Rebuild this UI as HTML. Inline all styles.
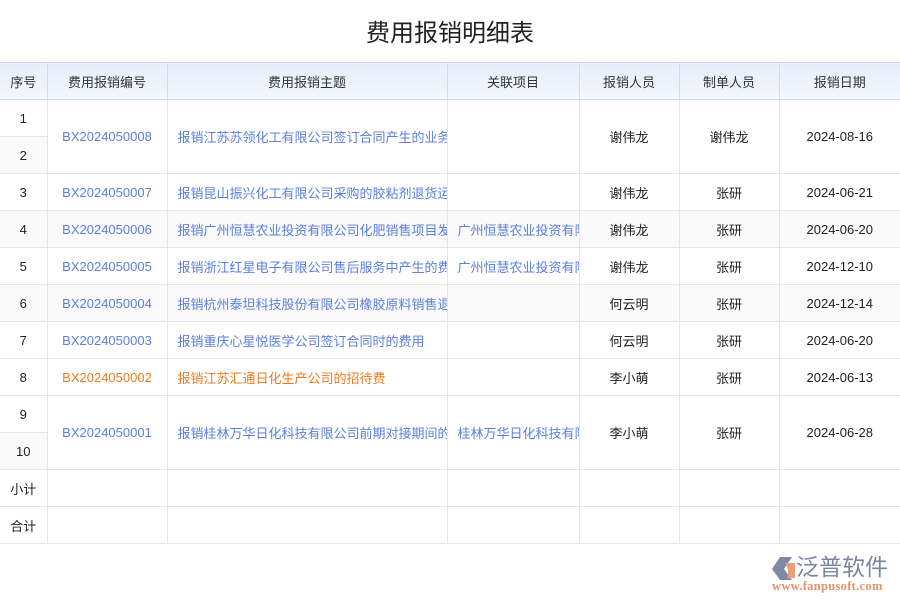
<!DOCTYPE html>
<html><head><meta charset="utf-8"><style>
*{margin:0;padding:0;box-sizing:border-box}
body{width:900px;height:600px;background:#fff;font-family:"Liberation Sans","Noto Sans CJK SC",sans-serif;position:relative;overflow:hidden}
h1{position:absolute;top:18px;left:0;width:900px;text-align:center;font-size:24px;font-weight:normal;color:#222;line-height:32px}
table{position:absolute;top:62px;left:0;width:900px;border-collapse:collapse;table-layout:fixed;font-size:13px}
td,th{border:1px solid #e6e6e6;height:37px;text-align:center;white-space:nowrap;overflow:hidden;color:#222;font-weight:normal}
th{background:linear-gradient(#e6eefa,#f4f8fe);border-color:#cfdcec;color:#333}
tr:first-child th{border-top:1px solid #c5d5ea}
td.l{text-align:left;padding-left:10px;text-overflow:clip}
.b{color:#5b7fe0}
.o{color:#f07a20}
.g td{background:#fafafa}
.gs{background:#fafafa}
td:first-child,th:first-child{border-left:none}
td:last-child,th:last-child{border-right:none}
.logo{position:absolute;left:770px;top:554px}
</style></head><body>
<h1>费用报销明细表</h1>
<table>
<colgroup><col style="width:47px"><col style="width:120px"><col style="width:280px"><col style="width:132px"><col style="width:100px"><col style="width:100px"><col style="width:121px"></colgroup>
<tr><th>序号</th><th>费用报销编号</th><th>费用报销主题</th><th>关联项目</th><th>报销人员</th><th>制单人员</th><th>报销日期</th></tr>
<tr><td>1</td><td rowspan="2" class="b">BX2024050008</td><td rowspan="2" class="l b">报销江苏苏领化工有限公司签订合同产生的业务费用</td><td rowspan="2"></td><td rowspan="2">谢伟龙</td><td rowspan="2">谢伟龙</td><td rowspan="2">2024-08-16</td></tr>
<tr><td class="gs">2</td></tr>
<tr><td>3</td><td class="b">BX2024050007</td><td class="l b">报销昆山振兴化工有限公司采购的胶粘剂退货运费</td><td></td><td>谢伟龙</td><td>张研</td><td>2024-06-21</td></tr>
<tr class="g"><td>4</td><td class="b">BX2024050006</td><td class="l b">报销广州恒慧农业投资有限公司化肥销售项目发生的费用</td><td class="l b">广州恒慧农业投资有限公司</td><td>谢伟龙</td><td>张研</td><td>2024-06-20</td></tr>
<tr><td>5</td><td class="b">BX2024050005</td><td class="l b">报销浙江红星电子有限公司售后服务中产生的费用</td><td class="l b">广州恒慧农业投资有限公司</td><td>谢伟龙</td><td>张研</td><td>2024-12-10</td></tr>
<tr class="g"><td>6</td><td class="b">BX2024050004</td><td class="l b">报销杭州泰坦科技股份有限公司橡胶原料销售退货费用</td><td></td><td>何云明</td><td>张研</td><td>2024-12-14</td></tr>
<tr><td>7</td><td class="b">BX2024050003</td><td class="l b">报销重庆心星悦医学公司签订合同时的费用</td><td></td><td>何云明</td><td>张研</td><td>2024-06-20</td></tr>
<tr><td>8</td><td class="o">BX2024050002</td><td class="l o">报销江苏汇通日化生产公司的招待费</td><td></td><td>李小萌</td><td>张研</td><td>2024-06-13</td></tr>
<tr><td>9</td><td rowspan="2" class="b">BX2024050001</td><td rowspan="2" class="l b">报销桂林万华日化科技有限公司前期对接期间的费用</td><td rowspan="2" class="l b">桂林万华日化科技有限公司</td><td rowspan="2">李小萌</td><td rowspan="2">张研</td><td rowspan="2">2024-06-28</td></tr>
<tr><td class="gs">10</td></tr>
<tr><td>小计</td><td></td><td></td><td></td><td></td><td></td><td></td></tr>
<tr><td>合计</td><td></td><td></td><td></td><td></td><td></td><td></td></tr>
</table>
<div class="logo">
<svg width="26" height="26" style="position:absolute;left:1px;top:2px"><path d="M9 1 L21 1 L13 13 L21 24 L9 24 L1 13Z" fill="#7d8aa5"/><path d="M14 7 L24 7 L24 22 L16 22 Q19 14 14 7Z" fill="#e8a07a"/></svg>
<div style="position:absolute;left:26px;top:-1px;font-size:23px;line-height:28px;color:#7a86a0;white-space:nowrap">泛普软件</div>
<div style="position:absolute;left:2px;top:25px;font-size:12.5px;font-weight:bold;color:#e8906a;font-family:'Liberation Serif',serif;white-space:nowrap;letter-spacing:0.3px">www.fanpusoft.com</div>
</div>
</body></html>
